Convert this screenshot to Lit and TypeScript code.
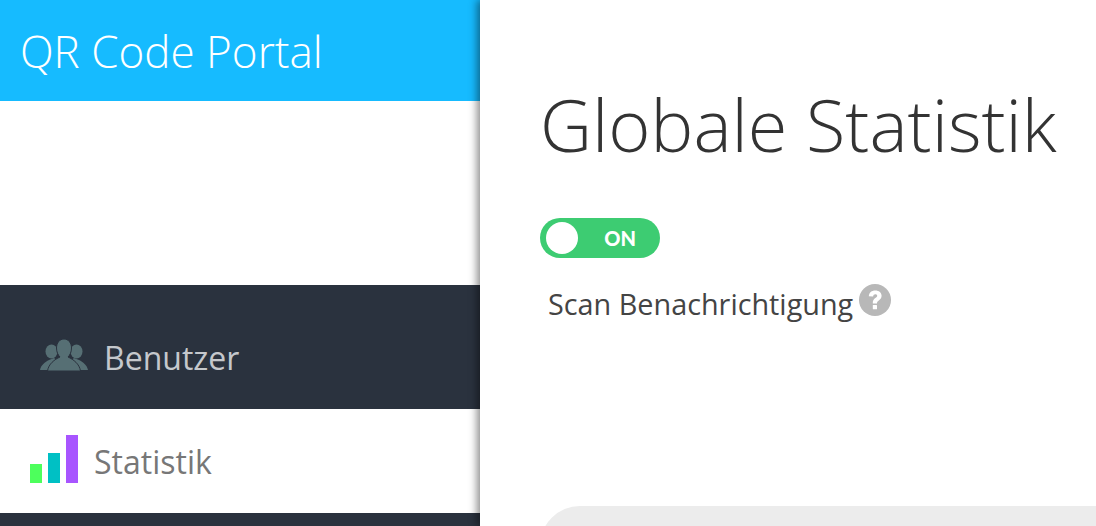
import { LitElement, html, css } from 'lit';
import { customElement } from 'lit/decorators.js';

@customElement('app-root')
export class AppRoot extends LitElement {
  static styles = css`
    :host {
      display: flex;
      width: 1096px;
      height: 526px;
      overflow: hidden;
      background: #fff;
      font-family: 'Open Sans', sans-serif;
    }
    .sidebar {
      flex: 0 0 480px;
      display: flex;
      flex-direction: column;
    }
    .brand {
      height: 101px;
      box-sizing: border-box;
      padding: 23px 0 0 20px;
      background: #16bbff;
      color: #fff;
      font-size: 44px;
      font-weight: 300;
      line-height: 56px;
      white-space: nowrap;
    }
    .spacer {
      height: 184px;
    }
    .nav-dark {
      height: 124px;
      box-sizing: border-box;
      padding: 20px 0 0 40px;
      display: flex;
      align-items: center;
      gap: 16px;
      background: #2a323e;
      color: #c5c8cc;
      font-size: 32px;
    }
    .nav-dark svg {
      margin-bottom: 4px;
    }
    .nav-light {
      height: 104px;
      box-sizing: border-box;
      padding: 0 0 0 30px;
      display: flex;
      align-items: center;
      gap: 16px;
      background: #fff;
      color: #777;
      font-size: 32px;
    }
    .nav-light svg {
      margin-bottom: 4px;
    }
    .nav-rest {
      flex: 1;
      background: #2a323e;
    }
    .main {
      flex: 1;
      position: relative;
      z-index: 1;
      min-width: 0;
      background: #fff;
      box-shadow: -3px 0 8px rgba(0, 0, 0, 0.45);
      padding-left: 60px;
      display: flex;
      flex-direction: column;
    }
    h1 {
      flex: none;
      margin: 75px 0 0;
      font-size: 72px;
      font-weight: 300;
      line-height: 98px;
      color: #333;
      white-space: nowrap;
    }
    .toggle {
      flex: none;
      margin-top: 45px;
      width: 120px;
      height: 40px;
      box-sizing: border-box;
      padding: 0 24px 0 6px;
      border-radius: 20px;
      background: #3dcc72;
      display: flex;
      align-items: center;
      justify-content: space-between;
      color: #fff;
      font-family: Lato, sans-serif;
      font-size: 20px;
      font-weight: 900;
    }
    .knob {
      width: 32px;
      height: 32px;
      border-radius: 50%;
      background: #fff;
    }
    .label {
      flex: none;
      margin: 22px 0 0 8px;
      display: flex;
      align-items: flex-start;
      gap: 6px;
      color: #444;
      font-size: 28.8px;
      line-height: 48px;
      white-space: nowrap;
    }
    .label svg {
      margin-top: 4px;
    }
    .panel {
      flex: none;
      margin-top: 178px;
      height: 80px;
      border-radius: 40px 0 0 0;
      background: #ececec;
    }
    svg {
      display: block;
      flex: none;
    }
  `;

  render() {
    return html`
      <aside class="sidebar">
        <div class="brand">QR Code Portal</div>
        <div class="spacer"></div>
        <div class="nav-dark">
          <svg width="48" height="32" viewBox="0 0 48 32" fill="#566f74">
            <ellipse cx="11.500" cy="12.500" rx="6" ry="7"></ellipse>
            <ellipse cx="36.500" cy="12.500" rx="6" ry="7"></ellipse>
            <path d="M0 31c1-5 5-8 9-10l5-2 4 3-6 9zM48 31c-1-5-5-8-9-10l-5-2-4 3 6 9z"></path>
            <path
              d="M24 0c4.500 0 7.500 4 7.500 9 0 4-1.500 7-3.500 9 5.500 2.500 11.500 7 12.500 14h-33c1-7 7-11.500 12.500-14-2-2-3.500-5-3.500-9 0-5 3-9 7.500-9z"
              stroke="#2a323e"
              stroke-width="1"
            ></path>
          </svg>
          Benutzer
        </div>
        <div class="nav-light">
          <svg width="48" height="48" viewBox="0 0 48 48">
            <rect x="0" y="29" width="12" height="19" fill="#4dff5c"></rect>
            <rect x="18" y="18" width="12" height="30" fill="#00c0c4"></rect>
            <rect x="36" y="0" width="12" height="48" fill="#a855ff"></rect>
          </svg>
          Statistik
        </div>
        <div class="nav-rest"></div>
      </aside>
      <main class="main">
        <h1>Globale Statistik</h1>
        <div class="toggle"><span class="knob"></span>ON</div>
        <div class="label">
          Scan Benachrichtigung
          <svg width="32" height="32" viewBox="0 0 32 32">
            <circle cx="16" cy="16" r="16" fill="#b8b8b8"></circle>
            <path d="M9.800 12.300c.3-3.700 2.800-5.800 6.500-5.800 3.800 0 6.300 2.200 6.300 5.300 0 2.300-1.200 3.500-2.800 4.700-1.300.9-1.800 1.500-1.800 3h-4.200c-.1-2.800.7-4.100 2.500-5.400 1.100-.8 1.900-1.400 1.900-2.300 0-1-.8-1.600-1.800-1.600-1.300 0-2.100.9-2.300 2.300z" fill="#fff"></path>
            <rect x="13.800" y="21" width="4.200" height="4.200" rx=".5" fill="#fff"></rect>
          </svg>
        </div>
        <div class="panel"></div>
      </main>
    `;
  }
}
